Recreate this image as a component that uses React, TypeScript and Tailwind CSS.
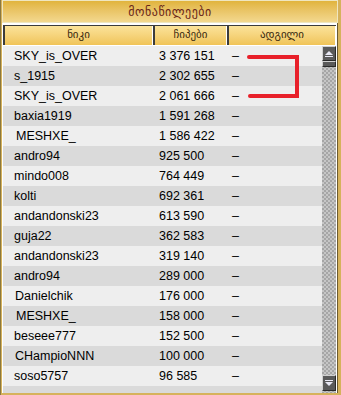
import React from "react";

const rows: [string, string, number][] = [
  ["SKY_is_OVER", "3 376 151", 0],
  ["s_1915", "2 302 655", 0],
  ["SKY_is_OVER", "2 061 666", 0],
  ["baxia1919", "1 591 268", 0],
  ["MESHXE_", "1 586 422", 2],
  ["andro94", "925 500", 0],
  ["mindo008", "764 449", 0],
  ["kolti", "692 361", 0],
  ["andandonski23", "613 590", 0],
  ["guja22", "362 583", 0],
  ["andandonski23", "319 140", 0],
  ["andro94", "289 000", 0],
  ["Danielchik", "176 000", 1],
  ["MESHXE_", "158 000", 2],
  ["beseee777", "152 500", 0],
  ["CHampioNNN", "100 000", 1],
  ["soso5757", "96 585", 0],
  ["", "", 0],
];

const font = { fontFamily: '"Liberation Sans", Arial, sans-serif' };

export default function App() {
  return (
    <div
      className="relative w-[341px] h-[395px] overflow-hidden bg-[#d6b25c] border-l border-[#8a7840] flex flex-col pr-[3px] pb-[2px] pl-[1px]"
      style={font}
    >
      {/* title bar */}
      <div className="h-[23px] shrink-0 border border-[#efe6c0] bg-gradient-to-b from-[#e1b43c] to-[#f3d88e] flex items-center justify-center">
        <span className="text-[12px] text-[#6a2618] tracking-[0.5px]" style={{ fontFamily: '"DejaVu Sans", sans-serif' }}>
          მონაწილეები
        </span>
      </div>
      {/* body */}
      <div className="flex-1 bg-white border-r border-[#6b5a30] pt-[2px] pl-[1px] pr-[1px] flex flex-col overflow-hidden">
        {/* header */}
        <div className="h-[21px] shrink-0 flex border-t border-[#3c3c3c] border-b border-b-white">
          {[
            ["ნიკი", "w-[150px]"],
            ["ჩიპები", "w-[74px]"],
            ["ადგილი", "flex-1"],
          ].map(([t, w]) => (
            <div
              key={t}
              className={`${w} h-full flex items-center justify-center bg-gradient-to-b from-[#fbe39a] to-[#f0c458] border-l-2 border-l-[#3c3c3c] border-r border-r-white`}
            >
              <span className="text-[11px] text-[#3a2a10]" style={{ fontFamily: '"DejaVu Sans", sans-serif' }}>
                {t}
              </span>
            </div>
          ))}
        </div>
        {/* rows + scrollbar */}
        <div className="flex-1 flex overflow-hidden relative">
          <div className="flex-1 flex flex-col">
            {rows.map(([n, c, off], i) => (
              <div
                key={i}
                className={`h-[20px] shrink-0 flex items-center text-[12.5px] text-black ${
                  i % 2 === 0 ? "bg-[#eeeeee]" : "bg-[#dadada]"
                }`}
              >
                <div className="w-[150px] pl-[11px]">
                  <span style={{ marginLeft: off }}>{n}</span>
                </div>
                <div className="w-[74px] pl-[6px]">{c}</div>
                <div className="flex-1 pl-[5px]">{n ? "–" : ""}</div>
              </div>
            ))}
          </div>
          {/* scrollbar */}
          <div
            className="w-[14px] shrink-0 flex flex-col justify-between bg-[#b4b4b4]"
            style={{
              backgroundImage:
                "repeating-conic-gradient(#a6a6a6 0% 25%, #c6c6c6 0% 50%)",
              backgroundSize: "4px 4px",
            }}
          >
            <div className="flex flex-col">
              <div className="h-[15px] bg-[#5a5a5a] border border-t-[#d0d0d0] border-l-[#d0d0d0] border-r-[#2a2a2a] border-b-[#2a2a2a] flex items-center justify-center">
                <svg width="8" height="6" viewBox="0 0 8 6">
                  <path d="M4 0 L8 4 L0 4 Z" fill="#e8e8f4" />
                  <rect x="0" y="5" width="8" height="1" fill="#e8e8f4" />
                </svg>
              </div>
              <div className="h-[6px] bg-[#5a5a5a] border border-t-[#d0d0d0] border-l-[#d0d0d0] border-r-[#2a2a2a] border-b-[#2a2a2a]" />
            </div>
            <div className="h-[16px] mb-[2px] bg-[#5a5a5a] border border-t-[#d0d0d0] border-l-[#d0d0d0] border-r-[#2a2a2a] border-b-[#2a2a2a] flex items-center justify-center">
              <svg width="8" height="6" viewBox="0 0 8 6">
                <rect x="0" y="0" width="8" height="1" fill="#e8e8f4" />
                <path d="M0 2 L8 2 L4 6 Z" fill="#e8e8f4" />
              </svg>
            </div>
          </div>
        </div>
      </div>
      {/* red annotation */}
      <svg className="absolute left-0 top-0 pointer-events-none" width="341" height="395">
        <path
          d="M248 57 L296 57 L296 96 L249 96"
          fill="none"
          stroke="#e8202a"
          strokeWidth="4"
          strokeLinecap="round"
          strokeLinejoin="miter"
        />
      </svg>
    </div>
  );
}
